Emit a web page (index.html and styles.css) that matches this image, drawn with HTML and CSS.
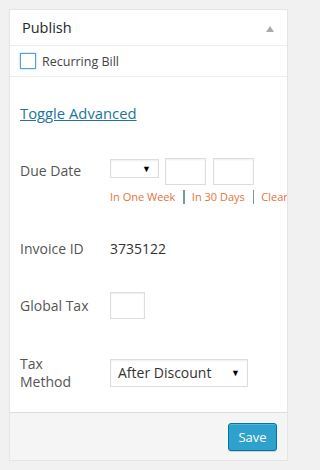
FILE: index.html
```html
<!DOCTYPE html>
<html>
<head>
<meta charset="utf-8">
<link rel="stylesheet" href="styles.css">
</head>
<body>
<div class="panel">
  <div class="panel-head">
    <h2 class="panel-title">Publish</h2>
    <span class="toggle-arrow"></span>
  </div>
  <div class="recurring">
    <span class="checkbox"></span>
    <span class="recurring-label">Recurring Bill</span>
  </div>
  <div class="panel-body">
    <a class="toggle-link" href="#">Toggle Advanced</a>
    <div class="field due">
      <div class="label">Due Date</div>
      <div class="control">
        <div class="date-inputs">
          <div class="select small"><span class="caret">▼</span></div>
          <div class="input date-box"></div>
          <div class="input date-box"></div>
        </div>
        <div class="quick-links">
          <span class="qlink">In One Week</span>
          <span class="sep"></span>
          <span class="qlink">In 30 Days</span>
          <span class="sep"></span>
          <span class="qlink">Clear</span>
        </div>
      </div>
    </div>
    <div class="field invoice">
      <div class="label">Invoice ID</div>
      <div class="control value">3735122</div>
    </div>
    <div class="field tax">
      <div class="label">Global Tax</div>
      <div class="control"><div class="input tax-box"></div></div>
    </div>
    <div class="field method">
      <div class="label">Tax<br>Method</div>
      <div class="control">
        <div class="select wide"><span class="sel-text">After Discount</span><span class="caret">▼</span></div>
      </div>
    </div>
  </div>
  <div class="panel-foot">
    <button class="save-btn">Save</button>
  </div>
</div>
</body>
</html>
```

FILE: styles.css
```css
html, body {
  margin: 0;
  padding: 0;
  background: #f1f1f1;
  font-family: "Open Sans", "Liberation Sans", sans-serif;
  color: #444;
}
body {
  padding: 9px 9px 0 9px;
}
.panel {
  width: 277px;
  background: #fff;
  border: 1px solid #e5e5e5;
  box-shadow: 0 1px 1px rgba(0,0,0,0.04);
  overflow: hidden;
}
.panel-head {
  height: 35px;
  border-bottom: 1px solid #eee;
  display: flex;
  align-items: center;
  justify-content: space-between;
  padding: 0 13px 0 12px;
}
.panel-title {
  margin: 0;
  font-size: 14.5px;
  font-weight: 400;
  color: #23282d;
  line-height: 1;
  position: relative;
  top: 1px;
}
.toggle-arrow {
  width: 0;
  height: 0;
  border-left: 4.5px solid transparent;
  border-right: 4.5px solid transparent;
  border-bottom: 6px solid #aaa;
  position: relative;
  top: 1px;
}
.recurring {
  height: 30px;
  border-bottom: 1px solid #eee;
  display: flex;
  align-items: center;
  padding-left: 10px;
}
.checkbox {
  width: 14px;
  height: 14px;
  border: 1px solid #5b9dd9;
  box-shadow: 0 0 2px rgba(30,140,190,0.5);
  background: #fff;
  margin-right: 6px;
}
.recurring-label {
  font-size: 12.5px;
  color: #444;
}
.panel-body {
  padding: 26px 10px 0 10px;
  height: 309px;
}
.toggle-link {
  display: block;
  font-size: 14.8px;
  color: #21759b;
  text-decoration: underline;
  line-height: 20px;
}
.field {
  display: flex;
  align-items: flex-start;
}
.label {
  width: 90px;
  flex: none;
  font-size: 14px;
  color: #555;
  line-height: 17px;
}
.method .label {
  line-height: 17.5px;
}
.control {
  flex: 1;
  min-width: 0;
}
.due {
  margin-top: 35px;
}
.due .label {
  padding-top: 4px;
}
.date-inputs {
  display: flex;
  align-items: flex-start;
  gap: 6px;
}
.select {
  background: #fff;
  border: 1px solid #ddd;
  box-shadow: inset 0 1px 2px rgba(0,0,0,0.07);
  display: flex;
  align-items: center;
  justify-content: space-between;
  box-sizing: border-box;
}
.select.small {
  width: 49px;
  height: 19px;
  margin-top: 1px;
  justify-content: flex-end;
  padding-right: 7px;
}
.caret {
  font-size: 9px;
  color: #000;
  line-height: 1;
}
.input {
  background: #fff;
  border: 1px solid #ddd;
  box-shadow: inset 0 1px 2px rgba(0,0,0,0.07);
  box-sizing: border-box;
}
.date-box {
  width: 41px;
  height: 27px;
}
.date-box + .date-box {
  margin-left: 1px;
}
.quick-links {
  display: flex;
  align-items: center;
  white-space: nowrap;
  margin-top: 3px;
  font-size: 11px;
  line-height: 17px;
}
.qlink {
  color: #e2753b;
  flex: none;
}
.sep {
  flex: none;
  width: 1.5px;
  height: 14px;
  background: #7a9a9a;
  margin: 0 7px 0 8px;
}
.invoice {
  margin-top: 35px;
  align-items: center;
}
.value {
  font-size: 14px;
  color: #333;
  line-height: 17px;
}
.tax {
  margin-top: 35px;
  align-items: center;
}
.tax-box {
  width: 35px;
  height: 27px;
}
.method {
  margin-top: 36px;
  align-items: center;
}
.select.wide {
  width: 138px;
  height: 28px;
  padding: 0 7px 0 7px;
}
.sel-text {
  font-size: 14px;
  color: #333;
}
.panel-foot {
  background: #f5f5f5;
  border-top: 1px solid #ddd;
  height: 47px;
  display: flex;
  align-items: center;
  justify-content: flex-end;
  padding-right: 10px;
}
.save-btn {
  font-family: "Open Sans", "Liberation Sans", sans-serif;
  font-size: 13px;
  color: #fff;
  background: #2ea2cc;
  border: 1px solid #0074a2;
  border-radius: 3px;
  box-shadow: inset 0 1px 0 rgba(120,200,230,0.5), 0 1px 0 rgba(0,0,0,0.15);
  width: 49px;
  height: 28px;
  padding: 0;
  margin-top: 1px;
}
```
